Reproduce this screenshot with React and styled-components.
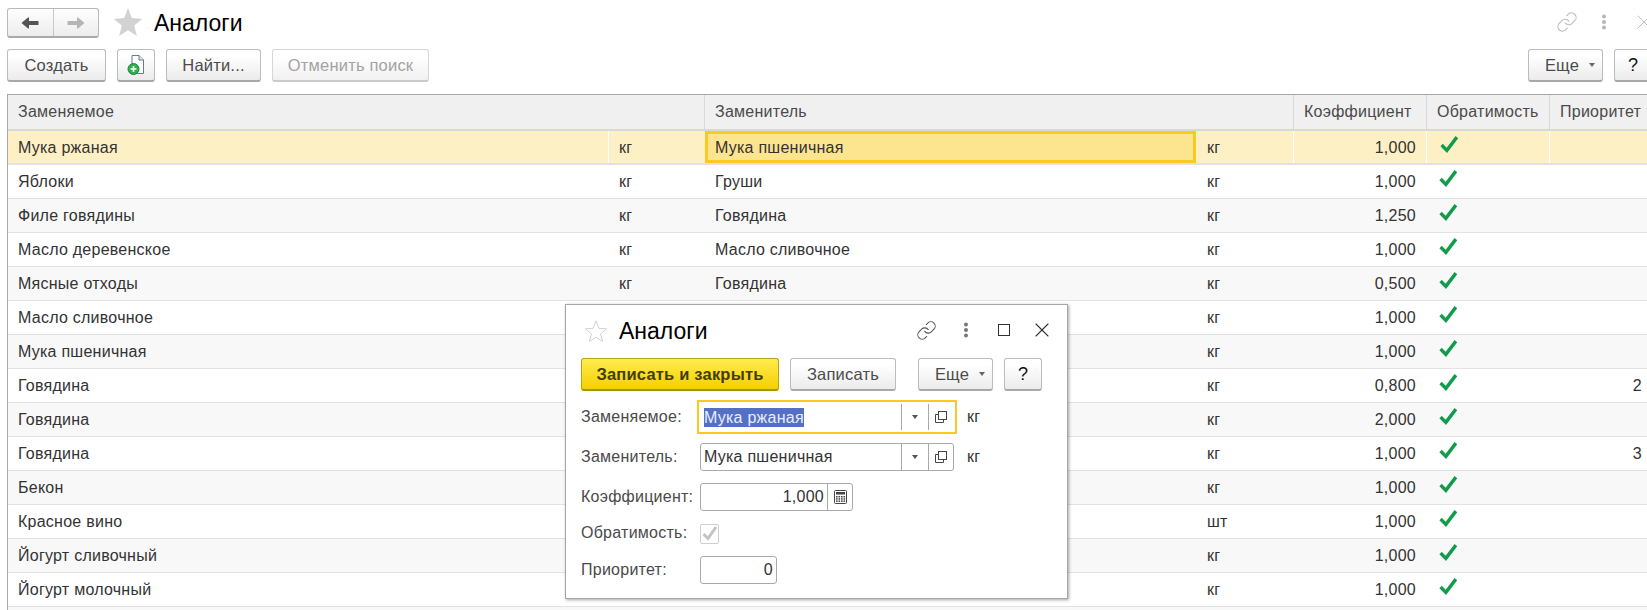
import React from 'react';
import styled, { createGlobalStyle, css } from 'styled-components';
import { Link as LinkIcon, X } from 'lucide-react';

const Global = createGlobalStyle`
  html, body { margin: 0; padding: 0; background: #fff; overflow: hidden; }
  body { font-family: "Liberation Sans", Arial, sans-serif; font-size: 16px; letter-spacing: .25px; color: #333; }
`;

const Page = styled.div`
  position: relative;
  width: 1647px;
  height: 610px;
  overflow: hidden;
`;
const Inner = styled.div`
  width: 1654px;
  padding-left: 7px;
  box-sizing: border-box;
`;
const TitleBar = styled.div`
  height: 49px;
  padding-top: 8px;
  box-sizing: border-box;
  display: flex;
  align-items: flex-start;
`;
const NavGroup = styled.div`
  width: 92px;
  height: 30px;
  box-sizing: border-box;
  display: flex;
  border: 1px solid #b9b9b9;
  border-bottom: 2px solid #aaa;
  border-radius: 3px;
  background: linear-gradient(#fff, #ececec);
`;
const NavPart = styled.div`
  flex: 1;
  display: flex;
  align-items: center;
  justify-content: center;
  & + & { border-left: 1px solid #c8c8c8; }
`;
const BigStar = styled.svg`
  width: 32px;
  height: 31px;
  margin: -1px 10px 0 13px;
`;
const Title = styled.h1`
  margin: 0;
  font-weight: 400;
  font-size: 23px;
  letter-spacing: 0;
  line-height: 30px;
  color: #000;
`;
const DialogTitle = styled(Title)`
  margin-top: -4px;
`;
const TopIcons = styled.div`
  margin-left: auto;
  display: flex;
  align-items: center;
  height: 28px;
  color: #bcbcbc;
  margin-right: -2px;
`;
const Spacer = styled.div`
  width: ${p => p.$w}px;
`;
const Toolbar = styled.div`
  display: flex;
  height: 45px;
  gap: 11px;
  align-items: flex-start;
`;
const Btn = styled.button`
  height: 33px;
  width: ${p => p.$w}px;
  box-sizing: border-box;
  padding: 0;
  border: 1px solid #bcbcbc;
  border-bottom: 2px solid #a8a8a8;
  border-radius: 3px;
  background: linear-gradient(#fff 20%, #ebebeb);
  font: 16.5px "Liberation Sans", Arial, sans-serif;
  letter-spacing: .2px;
  color: #4b4b4b;
  display: flex;
  align-items: center;
  justify-content: center;
  gap: 9px;
  ${p => p.$off && css`
    color: #a3a3a3;
    border-color: #d6d6d6;
    border-bottom-color: #cacaca;
    background: linear-gradient(#fff 20%, #f1f1f1);
  `}
  ${p => p.$dark && css`
    color: #111;
    font-size: 18px;
  `}
  ${p => p.$primary && css`
    font-weight: 700;
    color: #443d12;
    border: 1px solid #b8a21a;
    border-bottom: 2px solid #a8930f;
    background: linear-gradient(#ffec4f, #f4d000);
  `}
`;
const MoreBtn = styled(Btn)`
  padding-left: 9px;
  gap: 10px;
`;
const Push = styled.div`
  margin-left: auto;
  margin-right: ${p => p.$end || 0}px;
  display: flex;
  gap: 11px;
`;
const Caret = styled.span`
  width: 0;
  height: 0;
  border-left: 3.5px solid transparent;
  border-right: 3.5px solid transparent;
  border-top: 4px solid ${p => p.$c || '#666'};
`;
const Grid = styled.div`
  border-top: 1px solid #a9a9a9;
  border-left: 1px solid #a9a9a9;
`;
const Row = styled.div`
  display: grid;
  grid-template-columns: 600px 97px 491px 97px 133px 123px 105px;
  height: 34px;
  box-sizing: border-box;
  border-bottom: 1px solid #e2e2e2;
  background: ${p => (p.$current ? '#fdf0c4' : p.$alt ? '#f8f8f8' : '#fff')};
  color: #333;
  ${p => p.$current && css`
    border-bottom: 2px solid #e2e2e2;
    & > div:not(:nth-child(6)) { padding-top: 2px; }
  `}
`;
const HeadRow = styled(Row)`
  height: 36px;
  grid-template-columns: 600px 96px 492px 97px 133px 123px 105px;
  background: #f0f0f0;
  border-bottom: 2px solid #d8d8d8;
  color: #4a4a4a;
`;
const Cell = styled.div`
  display: flex;
  align-items: center;
  box-sizing: border-box;
  padding: 0 ${p => p.$endPad ?? 10}px 0 ${p => p.$pad ?? 10}px;
  white-space: nowrap;
  overflow: hidden;
  grid-column: span ${p => p.$span || 1};
  ${p => p.$right && 'justify-content: flex-end;'}
  ${p => p.$rule && css`border-left: 1px solid ${p.$head ? '#d9d9d9' : '#fff'};`}
  ${p => p.$active && css`
    background: #fde48e;
    border: 3px solid #fbc91f;
    padding-left: 7px;
  `}
`;
const Check = styled.svg`
  width: 19px;
  height: 18px;
  margin: -7px 0 0 3px;
`;
const Dialog = styled.div`
  position: absolute;
  left: 565px;
  top: 304px;
  width: 503px;
  height: 295px;
  box-sizing: border-box;
  background: #fff;
  border: 1px solid #a6a6a6;
  box-shadow: 1px 1px 3px rgba(0,0,0,.35);
  padding: 0 15px;
`;
const DialogHead = styled.div`
  height: 53px;
  padding-top: 15px;
  box-sizing: border-box;
  display: flex;
  align-items: flex-start;
`;
const SmallStar = styled.svg`
  width: 24px;
  height: 23px;
  margin: 0 11px 0 3px;
`;
const DialogIcons = styled.div`
  margin-left: auto;
  margin-right: -2px;
  display: flex;
  align-items: center;
  height: 20px;
  color: #555;
`;
const DialogBar = styled.div`
  display: flex;
  height: 45px;
  gap: 11px;
  align-items: flex-start;
`;
const Form = styled.div`
  display: flex;
  flex-direction: column;
  gap: 12px;
`;
const FormRow = styled.div`
  display: flex;
  align-items: center;
  height: ${p => p.$h || 28}px;
`;
const Label = styled.label`
  width: 119px;
  flex: none;
  color: #4a4a4a;
  padding-bottom: 1px;
`;
const Field = styled.div`
  width: ${p => p.$w}px;
  height: 28px;
  box-sizing: border-box;
  display: flex;
  align-items: stretch;
  border: 1px solid #a9a9a9;
  border-radius: 3px;
  background: #fff;
  ${p => p.$focus && css`
    border-radius: 0;
    border-color: #fff;
    outline: 2px solid #fbc91f;
    outline-offset: 1px;
  `}
`;
const FieldText = styled.div`
  flex: 1;
  display: flex;
  align-items: center;
  padding: 0 3px;
  ${p => p.$right && 'justify-content: flex-end;'}
  color: #333;
`;
const Selected = styled.span`
  background: #5470c4;
  color: #e8ecff;
  line-height: 19px;
`;
const FieldBtn = styled.div`
  width: ${p => p.$w}px;
  flex: none;
  display: flex;
  align-items: center;
  justify-content: center;
  border-left: 1px solid #a9a9a9;
`;
const Unit = styled.span`
  margin-left: 13px;
  color: #333;
`;
const Box = styled.div`
  width: 19px;
  height: 20px;
  box-sizing: border-box;
  border: 1px solid #cfcfcf;
  border-radius: 2px;
  display: flex;
  align-items: center;
  justify-content: center;
`;
const CloseMark = styled(X)`
  flex: none;
`;

const Arrow = ({ dir, color }) => (
  <svg width="18" height="12" viewBox="0 0 18 12" style={dir === 'r' ? { transform: 'scaleX(-1)' } : undefined}>
    <path d="M0.5 6 L7 0.5 L8 0.5 V4 H17.5 V8 H8 V11.5 L7 11.5 Z" fill={color} />
  </svg>
);
const Dots = ({ c }) => (
  <svg width="6" height="16" viewBox="0 0 6 16">
    <circle cx="3" cy="2.5" r="2" fill={c} />
    <circle cx="3" cy="8" r="2" fill={c} />
    <circle cx="3" cy="13.5" r="2" fill={c} />
  </svg>
);
const OpenIcon = () => (
  <svg width="12" height="12" viewBox="0 0 12 12" fill="none" stroke="#444" strokeWidth="1">
    <rect x="3.5" y="0.5" width="8" height="8" />
    <path d="M3.5 3.5 H0.5 V11.5 H8.5 V8.5" />
  </svg>
);
const CalcIcon = () => (
  <svg width="13" height="14" viewBox="0 0 13 14">
    <rect x="0.5" y="0.5" width="12" height="13" rx="1" fill="none" stroke="#444" />
    <rect x="2" y="2" width="9" height="2.5" fill="#444" />
    {[6, 8.2, 10.4].map(y => [2, 4.5, 7, 9.5].map(x => <rect key={`${x}-${y}`} x={x} y={y} width="1.6" height="1.5" fill="#444" />))}
  </svg>
);
const STAR = 'M12 1 L15 8.6 L23 9.2 L16.8 14.4 L18.8 22.3 L12 18 L5.2 22.3 L7.2 14.4 L1 9.2 L9 8.6 Z';

const rows = [
  ['Мука ржаная', 'кг', 'Мука пшеничная', 'кг', '1,000', ''],
  ['Яблоки', 'кг', 'Груши', 'кг', '1,000', ''],
  ['Филе говядины', 'кг', 'Говядина', 'кг', '1,250', ''],
  ['Масло деревенское', 'кг', 'Масло сливочное', 'кг', '1,000', ''],
  ['Мясные отходы', 'кг', 'Говядина', 'кг', '0,500', ''],
  ['Масло сливочное', '', '', 'кг', '1,000', ''],
  ['Мука пшеничная', '', '', 'кг', '1,000', ''],
  ['Говядина', '', '', 'кг', '0,800', '2'],
  ['Говядина', '', '', 'кг', '2,000', ''],
  ['Говядина', '', '', 'кг', '1,000', '3'],
  ['Бекон', '', '', 'кг', '1,000', ''],
  ['Красное вино', '', '', 'шт', '1,000', ''],
  ['Йогурт сливочный', '', '', 'кг', '1,000', ''],
  ['Йогурт молочный', '', '', 'кг', '1,000', ''],
];

export default function App() {
  return (
    <Page>
      <Global />
      <Inner>
        <TitleBar>
          <NavGroup>
            <NavPart><Arrow dir="l" color="#555" /></NavPart>
            <NavPart><Arrow dir="r" color="#b5b5b5" /></NavPart>
          </NavGroup>
          <BigStar viewBox="0 0 24 24"><path d={STAR} fill="#d2d2d2" /></BigStar>
          <Title>Аналоги</Title>
          <TopIcons>
            <LinkIcon size={22} strokeWidth={1.2} />
            <Spacer $w={23} />
            <Dots c="#b5b5b5" />
            <Spacer $w={25} />
            <CloseMark size={24} strokeWidth={1} />
          </TopIcons>
        </TitleBar>
        <Toolbar>
          <Btn $w={99}>Создать</Btn>
          <Btn $w={38}>
            <svg width="18" height="20" viewBox="0 0 18 20">
              <path d="M5 0.5 H12 L16.5 5 V18.5 H5 Z" fill="#fff" stroke="#6b7a8c" />
              <path d="M12 0.5 V5 H16.5" fill="#dfe5ec" stroke="#6b7a8c" />
              <circle cx="6.5" cy="14" r="5.5" fill="#2fae4e" stroke="#1e8a3a" />
              <path d="M6.5 11 V17 M3.5 14 H9.5" stroke="#fff" strokeWidth="1.6" />
            </svg>
          </Btn>
          <Btn $w={95}>Найти...</Btn>
          <Btn $w={157} $off>Отменить поиск</Btn>
          <Push $end={2}>
            <MoreBtn $w={75}>Еще <Caret /></MoreBtn>
            <Btn $w={38} $dark>?</Btn>
          </Push>
        </Toolbar>
        <Grid>
          <HeadRow>
            <Cell $span={2}>Заменяемое</Cell>
            <Cell $span={2} $rule $head>Заменитель</Cell>
            <Cell $rule $head>Коэффициент</Cell>
            <Cell $rule $head>Обратимость</Cell>
            <Cell $rule $head>Приоритет</Cell>
          </HeadRow>
          {rows.map((r, i) => (
            <Row key={i} $current={i === 0} $alt={i > 0 && i % 2 === 0}>
              <Cell>{r[0]}</Cell>
              <Cell $pad={i === 0 ? 10 : 11} $rule={i === 0}>{r[1]}</Cell>
              <Cell $active={i === 0}>{r[2]}</Cell>
              <Cell $pad={11}>{r[3]}</Cell>
              <Cell $right $rule={i === 0}>{r[4]}</Cell>
              <Cell $rule={i === 0}>
                <Check viewBox="0 0 18 17">
                  <path d="M1.5 9.5 L6.5 14.5 L16 2" fill="none" stroke="#0f9d4c" strokeWidth="3.2" />
                </Check>
              </Cell>
              <Cell $right $endPad={12} $rule={i === 0}>{r[5]}</Cell>
            </Row>
          ))}
          <Row $alt />
        </Grid>
      </Inner>
      <Dialog>
        <DialogHead>
          <SmallStar viewBox="0 0 24 24"><path d={STAR} fill="none" stroke="#cfcfcf" /></SmallStar>
          <DialogTitle>Аналоги</DialogTitle>
          <DialogIcons>
            <LinkIcon size={21} strokeWidth={1.2} />
            <Spacer $w={26} />
            <Dots c="#777" />
            <Spacer $w={29} />
            <svg width="12" height="12" viewBox="0 0 12 12">
              <rect x="0.5" y="0.5" width="11" height="11" fill="none" stroke="#333" />
            </svg>
            <Spacer $w={20} />
            <CloseMark size={24} strokeWidth={1.1} color="#333" />
          </DialogIcons>
        </DialogHead>
        <DialogBar>
          <Btn $w={198} $primary>Записать и закрыть</Btn>
          <Btn $w={106}>Записать</Btn>
          <Push $end={10}>
            <MoreBtn $w={75}>Еще <Caret /></MoreBtn>
            <Btn $w={38} $dark>?</Btn>
          </Push>
        </DialogBar>
        <Form>
          <FormRow>
            <Label>Заменяемое:</Label>
            <Field $w={254} $focus>
              <FieldText><Selected>Мука ржаная</Selected></FieldText>
              <FieldBtn $w={26}><Caret $c="#555" /></FieldBtn>
              <FieldBtn $w={24}><OpenIcon /></FieldBtn>
            </Field>
            <Unit>кг</Unit>
          </FormRow>
          <FormRow>
            <Label>Заменитель:</Label>
            <Field $w={254}>
              <FieldText>Мука пшеничная</FieldText>
              <FieldBtn $w={26}><Caret $c="#555" /></FieldBtn>
              <FieldBtn $w={24}><OpenIcon /></FieldBtn>
            </Field>
            <Unit>кг</Unit>
          </FormRow>
          <FormRow>
            <Label>Коэффициент:</Label>
            <Field $w={153}>
              <FieldText $right>1,000</FieldText>
              <FieldBtn $w={24}><CalcIcon /></FieldBtn>
            </Field>
          </FormRow>
          <FormRow $h={21}>
            <Label>Обратимость:</Label>
            <Box>
              <svg width="17" height="17" viewBox="0 0 17 17">
                <path d="M2.5 9 L7 13.5 L15 2" fill="none" stroke="#c4c4c4" strokeWidth="3" />
              </svg>
            </Box>
          </FormRow>
          <FormRow>
            <Label>Приоритет:</Label>
            <Field $w={77}>
              <FieldText $right>0</FieldText>
            </Field>
          </FormRow>
        </Form>
      </Dialog>
    </Page>
  );
}
